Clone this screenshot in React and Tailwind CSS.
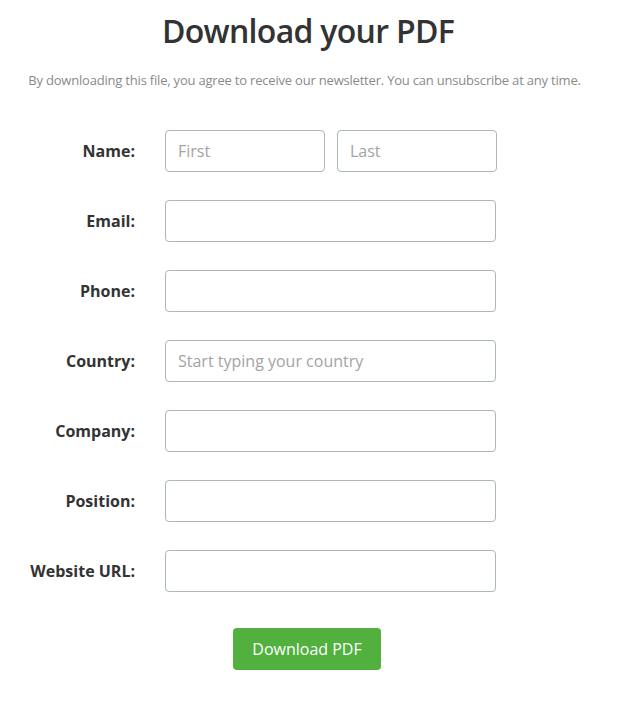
const fields = [
  { label: 'Email:' },
  { label: 'Phone:' },
  { label: 'Country:', placeholder: 'Start typing your country' },
  { label: 'Company:' },
  { label: 'Position:' },
  { label: 'Website URL:' },
];

const inputClass =
  'h-[42px] rounded-[4px] border border-[#abb8b5] bg-white px-3 text-[16px] text-[#333] placeholder:text-[#a3a3a3] outline-none';

const App = () => {
  return (
    <div
      className="min-h-[706px] w-[620px] bg-white text-[#333]"
      style={{ fontFamily: '"Open Sans", "Noto Sans", sans-serif' }}
    >
      <h1 className="pt-[10px] pr-[4px] text-center text-[32px] leading-[42px] font-semibold tracking-[-0.7px] text-[#333]">
        Download your PDF
      </h1>
      <p className="mt-[18px] pr-[11px] text-center text-[13px] leading-[20px] text-[#8a8a8a] tracking-[-0.2px]">
        By downloading this file, you agree to receive our newsletter. You can unsubscribe at any time.
      </p>

      <form className="mt-[40px] flex flex-col gap-[28px]">
        <div className="flex items-center">
          <label className="w-[135px] text-right text-[16px] font-bold">Name:</label>
          <div className="ml-[30px] flex gap-[12px]">
            <input type="text" placeholder="First" className={`${inputClass} w-[160px]`} />
            <input type="text" placeholder="Last" className={`${inputClass} w-[160px]`} />
          </div>
        </div>

        {fields.map((f) => (
          <div key={f.label} className="flex items-center">
            <label className="w-[135px] text-right text-[16px] font-bold">{f.label}</label>
            <input
              type="text"
              placeholder={f.placeholder || ''}
              className={`${inputClass} ml-[30px] w-[331px]`}
            />
          </div>
        ))}

        <div className="mt-[8px] flex justify-center">
          <button
            type="button"
            className="ml-[-6px] h-[42px] w-[148px] rounded-[4px] bg-[#52b03f] text-[16px] text-white"
          >
            Download PDF
          </button>
        </div>
      </form>
    </div>
  );
};

export default App;
